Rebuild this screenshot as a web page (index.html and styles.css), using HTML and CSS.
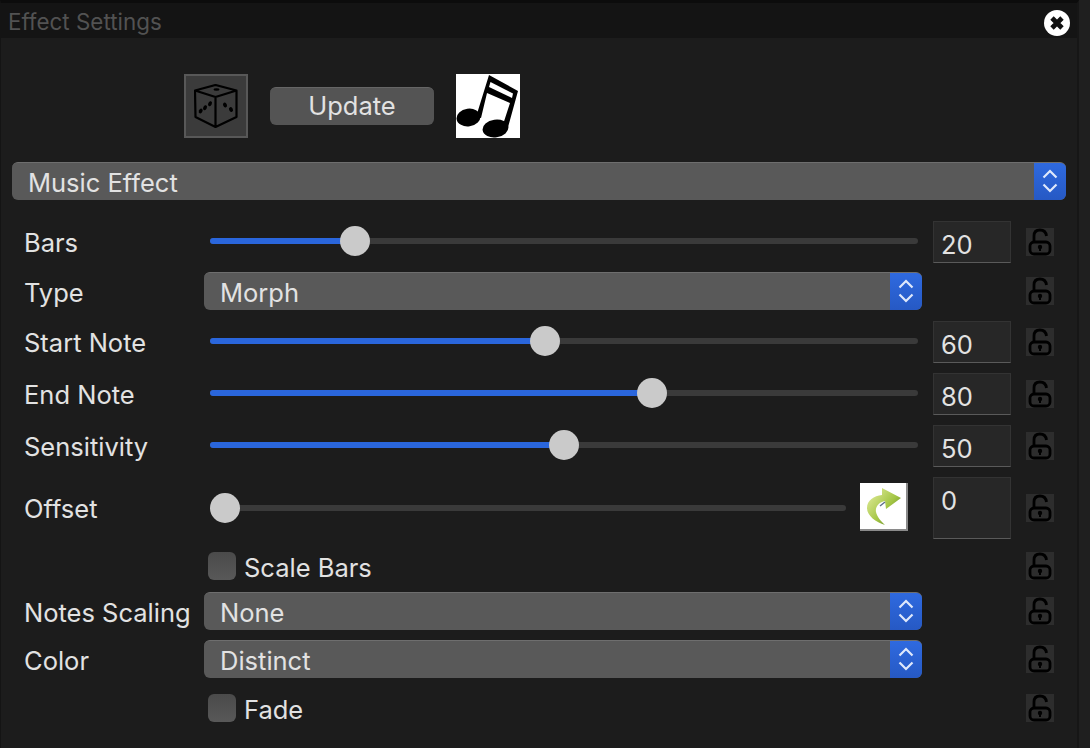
FILE: index.html
```html
<!DOCTYPE html>
<html lang="en">
<head>
<meta charset="utf-8">
<title>Effect Settings</title>
<link rel="stylesheet" href="styles.css">
</head>
<body>
<svg class="defs" width="0" height="0" aria-hidden="true">
  <symbol id="lock" viewBox="0 0 28 28">
    <path d="M8 14V8C8 4 10.500 2 14 2s6 2 6.500 6" fill="none" stroke="#000" stroke-width="2.800"/>
    <rect x="4" y="14" width="20" height="12" rx="4" fill="none" stroke="#000" stroke-width="2.800"/>
    <circle cx="14" cy="19" r="2.200" fill="#000"/>
    <rect x="13" y="19" width="2" height="4" fill="#000"/>
  </symbol>
  <symbol id="chev" viewBox="0 0 32 38">
    <path d="M9.500 15.500 16 9l6.500 6.500M9.500 22.500 16 29l6.500-6.500" fill="none" stroke="#dfe8fb" stroke-width="2.200"/>
  </symbol>
</svg>
<div class="window">
  <header class="titlebar">
    <span class="title">Effect Settings</span>
    <svg class="close" viewBox="0 0 26 26" width="26" height="26">
      <circle cx="13" cy="13" r="13" fill="#fff"/>
      <path d="M8 8l10 10M18 8 8 18" stroke="#111" stroke-width="4.800"/>
    </svg>
  </header>

  <div class="toolbar">
    <div class="dice-btn">
      <svg viewBox="0 0 44 44" width="44" height="44">
        <path d="M21.500 1 42.500 6.500 42.500 33 21.500 43 1.500 33 1 6.500ZM1 6.500 21.500 13 42.500 6.500M21.500 13V43" fill="none" stroke="#000" stroke-width="2.200" stroke-linejoin="round"/>
        <ellipse cx="22.500" cy="5.500" rx="3" ry="1.200" fill="#000"/>
        <ellipse cx="6.700" cy="27" rx="1.800" ry="2.600" transform="rotate(25 6.700 27)" fill="#000"/>
        <ellipse cx="11" cy="23.700" rx="1.800" ry="2.600" transform="rotate(25 11 23.700)" fill="#000"/>
        <ellipse cx="16" cy="19.700" rx="1.800" ry="2.600" transform="rotate(25 16 19.700)" fill="#000"/>
        <ellipse cx="31" cy="21" rx="1.900" ry="2.500" transform="rotate(-25 31 21)" fill="#000"/>
        <ellipse cx="37" cy="25.500" rx="1.900" ry="2.500" transform="rotate(-25 37 25.500)" fill="#000"/>
      </svg>
    </div>
    <button class="update">Update</button>
    <div class="note">
      <svg viewBox="0 0 64 64" width="64" height="64">
        <ellipse cx="12.500" cy="43.500" rx="12" ry="8.800" transform="rotate(-8 12.500 43.500)" fill="#000"/>
        <ellipse cx="39.500" cy="54.500" rx="13" ry="8.800" transform="rotate(-8 39.500 54.500)" fill="#000"/>
        <path d="M33 1 62 17 51.500 55 46.500 52 54 29 31 19 25 44 20 43Z" fill="#000"/>
        <path d="M34.500 8 57 19.500 56 24 33 13Z" fill="#fff"/>
      </svg>
    </div>
  </div>

  <div class="select select-main"><span>Music Effect</span><i class="stepper"><svg width="32" height="38"><use href="#chev"/></svg></i></div>

  <div class="rows">
    <div class="row row-slider row-bars">
      <label>Bars</label>
      <div class="slider"><div class="fill" style="width:20.500%"></div><div class="thumb" style="left:20.500%"></div></div>
      <div class="value">20</div>
      <svg class="lock"><use href="#lock"/></svg>
    </div>
    <div class="row row-type">
      <label>Type</label>
      <div class="select"><span>Morph</span><i class="stepper"><svg width="32" height="38"><use href="#chev"/></svg></i></div>
      <div class="spacer"></div>
      <svg class="lock"><use href="#lock"/></svg>
    </div>
    <div class="row row-slider row-start">
      <label>Start Note</label>
      <div class="slider"><div class="fill" style="width:47.300%"></div><div class="thumb" style="left:47.300%"></div></div>
      <div class="value">60</div>
      <svg class="lock"><use href="#lock"/></svg>
    </div>
    <div class="row row-slider row-end">
      <label>End Note</label>
      <div class="slider"><div class="fill" style="width:62.400%"></div><div class="thumb" style="left:62.400%"></div></div>
      <div class="value">80</div>
      <svg class="lock"><use href="#lock"/></svg>
    </div>
    <div class="row row-slider row-sens">
      <label>Sensitivity</label>
      <div class="slider"><div class="fill" style="width:50%"></div><div class="thumb" style="left:50%"></div></div>
      <div class="value">50</div>
      <svg class="lock"><use href="#lock"/></svg>
    </div>
    <div class="row row-slider row-offset">
      <label>Offset</label>
      <div class="offset-ctl">
        <div class="slider"><div class="thumb" style="left:2.400%"></div></div>
        <div class="arrow">
          <svg viewBox="0 0 46 46" width="46" height="46">
            <defs><linearGradient id="g" x1="0.100" y1="0.200" x2="0.900" y2="0.900"><stop offset="0" stop-color="#d7e58c"/><stop offset="0.550" stop-color="#a3c544"/><stop offset="1" stop-color="#587c22"/></linearGradient></defs>
            <path d="M22 5 41 15 26 26 25 18C19 19 15 24 16 29 17 34 21 38 25 42 16 39 7 33 7 25 7 17 14 13 22 12Z" fill="url(#g)"/>
            <path d="M25 19 20 23" stroke="#5c6f8a" stroke-width="1.500"/>
          </svg>
        </div>
      </div>
      <div class="value value-tall">0</div>
      <svg class="lock"><use href="#lock"/></svg>
    </div>
    <div class="row row-scale">
      <span class="no-label"></span>
      <div class="check"><i class="box"></i><span>Scale Bars</span></div>
      <div class="spacer"></div>
      <svg class="lock"><use href="#lock"/></svg>
    </div>
    <div class="row row-notes">
      <label>Notes Scaling</label>
      <div class="select"><span>None</span><i class="stepper"><svg width="32" height="38"><use href="#chev"/></svg></i></div>
      <div class="spacer"></div>
      <svg class="lock"><use href="#lock"/></svg>
    </div>
    <div class="row row-color">
      <label>Color</label>
      <div class="select"><span>Distinct</span><i class="stepper"><svg width="32" height="38"><use href="#chev"/></svg></i></div>
      <div class="spacer"></div>
      <svg class="lock"><use href="#lock"/></svg>
    </div>
    <div class="row row-fade">
      <span class="no-label"></span>
      <div class="check"><i class="box"></i><span>Fade</span></div>
      <div class="spacer"></div>
      <svg class="lock"><use href="#lock"/></svg>
    </div>
  </div>
</div>
</body>
</html>
```
FILE: styles.css
```css
* { box-sizing: border-box; }
html, body { margin: 0; height: 100%; }
body {
  background: #1f1f1f;
  overflow: hidden;
  font-family: Inter, "Liberation Sans", sans-serif;
  font-size: 25.500px;
  color: #e2e2e2;
}
.defs { position: absolute; }
.window {
  width: 1079px;
  height: 748px;
  background: #1c1c1c;
  border-left: 1px solid #141414;
  border-right: 2px solid #161616;
  border-top: 3px solid #0c0c0c;
}
.titlebar {
  height: 35px;
  background: #141414;
  display: flex;
  align-items: center;
  justify-content: space-between;
  padding-left: 7px;
}
.title { color: #525252; font-size: 22.400px; padding-top: 2px; }
.close { margin-right: 7px; margin-top: 5px; flex: none; }
.toolbar {
  display: flex;
  align-items: center;
  height: 64px;
  margin-top: 36px;
  padding-left: 183px;
}
.dice-btn {
  width: 64px; height: 64px;
  background: #3b3b3b;
  border: 2px solid #585858;
  display: flex; align-items: center; justify-content: center;
}
.update {
  margin-left: 22px;
  width: 164px; height: 38px;
  background: #545454;
  border: 0;
  border-top: 1px solid #666;
  border-radius: 6px;
  color: #e2e2e2;
  font: inherit;
  padding: 0 0 2px;
}
.note { margin-left: 22px; width: 64px; height: 64px; background: #fff; }
.note svg, .dice-btn svg, .arrow svg, .lock { display: block; }
.select {
  height: 38px;
  background: #595959;
  border-top: 1px solid #6e6e6e;
  border-radius: 6px;
  display: flex;
  align-items: center;
  padding-left: 16px;
  overflow: hidden;
}
.select > span { padding-top: 2px; }
.select-main { margin: 24px 11px 0 11px; }
.stepper {
  margin-left: auto;
  width: 32px;
  height: 38px;
  margin-top: -1px;
  background: linear-gradient(#2f6ae0, #2659c4);
  display: block;
  flex: none;
}
.stepper svg { display: block; }
.rows { display: flex; flex-direction: column; padding-left: 23px; margin-top: 21px; }
.row { display: flex; align-items: center; }
.row label, .no-label { width: 180px; flex: none; padding-top: 2px; white-space: nowrap; }
.row-slider label { padding-top: 0; }
.row-bars, .row-start, .row-end, .row-sens { height: 42px; }
.row-type, .row-notes, .row-color { height: 38px; }
.row-type { margin-top: 9px; }
.row-start { margin-top: 11px; }
.row-end, .row-sens, .row-offset, .row-color { margin-top: 10px; }
.row-offset { height: 62px; }
.row-scale { height: 28px; margin-top: 13px; }
.row-notes { margin-top: 12px; }
.row-fade { height: 28px; margin-top: 16px; }
.slider {
  position: relative;
  height: 6px;
  width: 708px;
  margin: 0 15px 2px 6px;
  background: #3a3a3a;
  border-radius: 3px;
  flex: none;
}
.fill { height: 6px; background: #2a66dc; border-radius: 3px; }
.thumb {
  position: absolute;
  top: -12px;
  width: 30px; height: 30px;
  margin-left: -15px;
  border-radius: 50%;
  background: #cacaca;
}
.value {
  width: 78px; height: 42px;
  flex: none;
  background: #272727;
  border: 1px solid #333;
  border-bottom-color: #5a5a5a;
  padding: 7px 0 0 7px;
  line-height: 32px;
}
.value-tall { height: 62px; padding-top: 7px; }
.row .select { width: 718px; flex: none; margin-right: 10px; }
.spacer { width: 79px; flex: none; }
.check { width: 718px; flex: none; display: flex; align-items: center; padding-left: 4px; margin-right: 10px; gap: 8px; }
.check span { padding-top: 2px; }
.box {
  width: 28px; height: 28px;
  background: linear-gradient(#4a4a4a, #585858);
  border-radius: 6px;
  display: block;
}
.offset-ctl { width: 719px; flex: none; display: flex; align-items: center; margin-right: 10px; }
.offset-ctl .slider { width: 636px; margin: 0 14px 0 6px; }
.arrow {
  width: 48px; height: 48px;
  background: #fff;
  border-right: 2px solid #8a8a8a;
  border-bottom: 2px solid #8a8a8a;
  margin-top: -2px;
}
.lock {
  width: 28px; height: 28px;
  margin-left: 15px;
  background: #2d2d2d;
  flex: none;
}
```
